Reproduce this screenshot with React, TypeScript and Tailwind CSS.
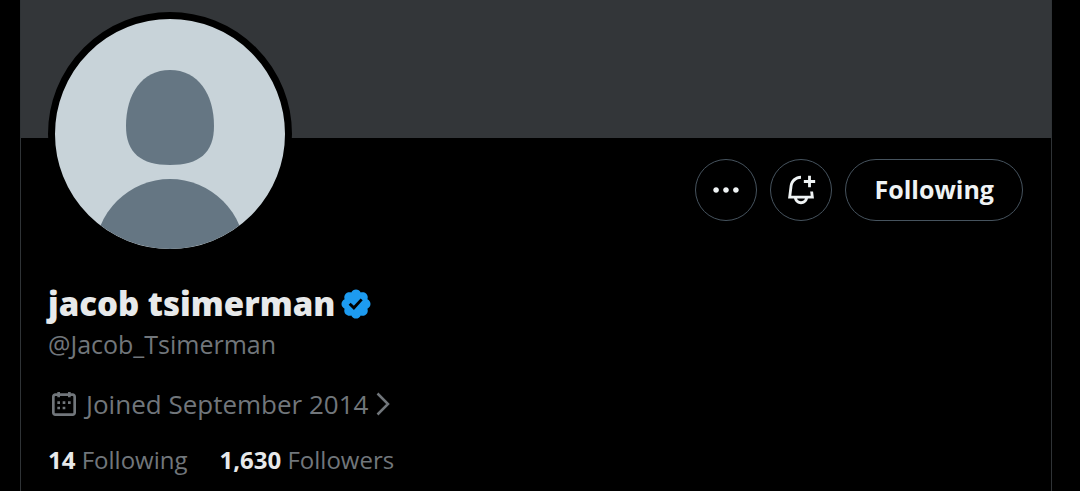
import type { ReactNode } from "react";

const stats = [
  { value: "14", label: "Following", href: "#following" },
  { value: "1,630", label: "Followers", href: "#followers" },
];

function Icon({ path, className, box = 24 }: { path: string; className: string; box?: number }) {
  return (
    <svg viewBox={`0 0 ${box} ${box}`} className={`shrink-0 fill-current ${className}`} aria-hidden>
      <path d={path} />
    </svg>
  );
}

const icons = {
  more: "M3 12c0-1.1.9-2 2-2s2 .9 2 2-.9 2-2 2-2-.9-2-2zm9 2c1.1 0 2-.9 2-2s-.9-2-2-2-2 .9-2 2 .9 2 2 2zm7 0c1.1 0 2-.9 2-2s-.9-2-2-2-2 .9-2 2 .9 2 2 2z",
  notify:
    "M22 5v2h-3v3h-2V7h-3V5h3V2h2v3h3zm-.86 13h-4.241c-.464 2.281-2.482 4-4.899 4s-4.435-1.719-4.899-4H2.87L4 9.05C4.51 5.02 7.93 2 12 2v2C8.94 4 6.36 6.27 5.98 9.3L5.13 16h13.73l-.38-3h2.02l.64 5zm-6.35 0H9.21c.41 1.17 1.52 2 2.79 2s2.38-.83 2.79-2z",
  calendar:
    "M7 4V3h2v1h6V3h2v1h1.5C19.89 4 21 5.12 21 6.5v12c0 1.38-1.11 2.5-2.5 2.5h-13C4.12 21 3 19.88 3 18.5v-12C3 5.12 4.12 4 5.5 4H7zm0 2H5.5c-.27 0-.5.22-.5.5v12c0 .28.23.5.5.5h13c.28 0 .5-.22.5-.5v-12c0-.28-.22-.5-.5-.5H17v1h-2V6H9v1H7V6zm0 6h2v-2H7v2zm0 4h2v-2H7v2zm4-4h2v-2h-2v2zm0 4h2v-2h-2v2zm4-4h2v-2h-2v2z",
  verified:
    "M20.396 11c-.018-.646-.215-1.275-.57-1.816-.354-.54-.852-.972-1.438-1.246.223-.607.27-1.264.14-1.897-.131-.634-.437-1.218-.882-1.687-.47-.445-1.053-.75-1.687-.882-.633-.13-1.29-.083-1.897.14-.273-.587-.704-1.086-1.245-1.44S11.647 1.62 11 1.604c-.646.017-1.273.213-1.813.568s-.969.854-1.24 1.44c-.608-.223-1.267-.272-1.902-.14-.635.13-1.22.436-1.69.882-.445.47-.749 1.055-.878 1.688-.13.633-.08 1.29.144 1.896-.587.274-1.087.705-1.443 1.245-.356.54-.555 1.17-.574 1.817.02.647.218 1.276.574 1.817.356.54.856.972 1.443 1.245-.224.606-.274 1.263-.144 1.896.13.634.433 1.218.877 1.688.47.443 1.054.747 1.687.878.633.132 1.29.084 1.897-.136.274.586.705 1.084 1.246 1.439.54.354 1.17.551 1.816.569.647-.016 1.276-.213 1.817-.567s.972-.854 1.245-1.44c.604.239 1.266.296 1.903.164.636-.132 1.22-.447 1.68-.907.46-.46.776-1.044.908-1.681s.075-1.299-.165-1.903c.586-.274 1.084-.705 1.439-1.246.354-.54.551-1.17.569-1.816zM9.662 14.85l-3.429-3.428 1.293-1.302 2.072 2.072 4.4-4.794 1.347 1.246z",
};

function RoundButton({ label, children }: { label: string; children: ReactNode }) {
  return (
    <button
      type="button"
      aria-label={label}
      className="grid size-[62px] place-items-center rounded-full border border-[#46535e] text-[#eff3f4]"
    >
      {children}
    </button>
  );
}

function Avatar() {
  return (
    <svg
      viewBox="0 0 230 230"
      className="-mt-[126px] box-content size-[230px] shrink-0 rounded-full border-7 border-black bg-[#c8d3d9]"
      role="img"
      aria-label="Profile picture"
    >
      <defs>
        <clipPath id="avatar-clip">
          <circle cx="115" cy="115" r="115" />
        </clipPath>
      </defs>
      <g clipPath="url(#avatar-clip)" fill="#657683">
        <path d="M115 51C87 51 71 75 71 107C71 134 86 146 115 146C144 146 159 134 159 107C159 75 143 51 115 51Z" />
        <circle cx="115" cy="235" r="75" />
      </g>
    </svg>
  );
}

export default function App() {
  return (
    <div className="min-h-screen bg-black pr-7 pl-5 font-['Open_Sans','Noto_Sans',sans-serif] text-[#e7e9ea]">
      <main className="min-h-screen border-x border-[#2f3336]">
        <div className="h-[138px] bg-[#333639]" />
        <div className="flex items-start justify-between pr-7 pl-[27px]">
          <Avatar />
          <div className="flex gap-[13px] pt-[21px]">
            <RoundButton label="More">
              <Icon path={icons.more} className="size-[34px]" />
            </RoundButton>
            <RoundButton label="Notify me">
              <Icon path={icons.notify} className="size-[34px]" />
            </RoundButton>
            <button
              type="button"
              className="h-[62px] rounded-full border border-[#46535e] px-7 text-[25px] font-bold text-[#eff3f4]"
            >
              Following
            </button>
          </div>
        </div>

        <section className="px-[27px] pt-6 text-[25px] leading-8 text-[#71767b]">
          <h1 className="flex items-center gap-1 text-[33px] leading-12 font-extrabold text-[#e7e9ea]">
            jacob tsimerman
            <Icon path={icons.verified} box={22} className="size-[34px] text-[#1d9bf0]" />
          </h1>
          <p>@Jacob_Tsimerman</p>
          <a href="#about" className="mt-7 flex items-center text-[26px]">
            <Icon path={icons.calendar} className="mr-1.5 size-8" />
            Joined September 2014
            <svg viewBox="0 0 14 24" className="ml-2 h-6 w-3.5" fill="none" stroke="currentColor" strokeWidth="2.5" aria-hidden>
              <path d="M1.5 1.5L12 12L1.5 22.5" />
            </svg>
          </a>
          <div className="mt-6 flex gap-8 text-2xl leading-8">
            {stats.map((s) => (
              <a key={s.label} href={s.href}>
                <span className="font-bold text-[#e7e9ea]">{s.value}</span> {s.label}
              </a>
            ))}
          </div>
        </section>
      </main>
    </div>
  );
}
